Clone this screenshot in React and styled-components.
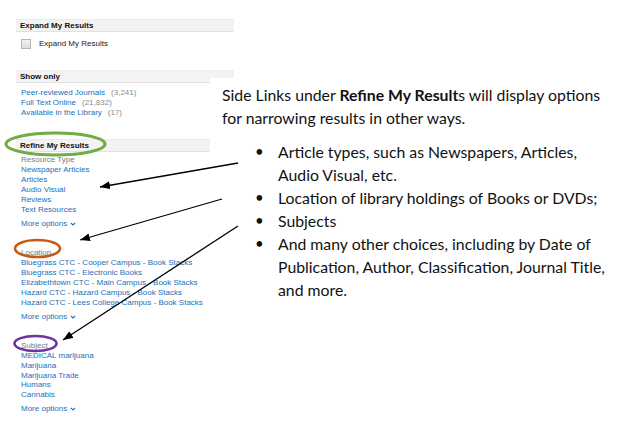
import React from "react";
import styled, { createGlobalStyle } from "styled-components";

const Global = createGlobalStyle`
  html, body { margin: 0; padding: 0; background: #fff; }
  body { font-family: "Liberation Sans", Arial, sans-serif; }
`;

const Page = styled.div`
  position: relative;
  width: 632px;
  height: 438px;
  overflow: hidden;
  background: #fff;
`;

const Sidebar = styled.div`
  width: 218px;
  margin-left: 16px;
  padding-top: 19px;
  font-family: "Liberation Sans", Arial, sans-serif;
  font-size: 8px;
  line-height: 10px;
`;

const SectionBar = styled.div`
  height: 11px;
  line-height: 11px;
  background: #f3f3f3;
  border-top: 1px solid #ebebeb;
  border-bottom: 1px solid #e2e2e2;
  padding-left: 4px;
  font-weight: bold;
  color: #111;
  margin-top: ${(p) => p.$top || 0}px;
`;

const CheckRow = styled.label`
  display: flex;
  align-items: center;
  gap: 8px;
  padding: 7px 0 0 5px;
  color: #222;
`;

const Box = styled.span`
  width: 8px;
  height: 8px;
  border: 1px solid #b5b5b5;
  background: linear-gradient(#f2f2f2, #dcdcdc);
`;

const LinkList = styled.ul`
  list-style: none;
  margin: ${(p) => p.$top || 0}px 0 0 0;
  padding: 0 0 0 5px;
`;

const Item = styled.li`
  height: ${(p) => p.$h || 10}px;
  white-space: nowrap;
  color: #1b6fb8;
`;

const Count = styled.span`
  color: #8a8a8a;
  margin-left: 6px;
`;

const GroupLabel = styled.div`
  padding-left: 5px;
  margin-top: ${(p) => p.$top || 0}px;
  height: 10px;
  color: #7a7a7a;
`;

const More = styled.div`
  padding-left: 5px;
  margin-top: 4px;
  height: 10px;
  color: #1b6fb8;
  display: flex;
  align-items: center;
  gap: 3px;
`;

const Callout = styled.div`
  position: absolute;
  left: 210px;
  top: 78px;
  right: 0;
  height: 230px;
  background: #fff;
  padding: 5px 0 0 12px;
  box-sizing: border-box;
  font-family: Lato, "Open Sans", sans-serif;
  font-size: 15.8px;
  line-height: 23px;
  color: #111;
`;

const Lead = styled.p`
  margin: 0;
  width: 386px;
`;

const Bullets = styled.ul`
  list-style: none;
  margin: 11px 0 0 0;
  padding: 0 0 0 33px;
`;

const Bullet = styled.li`
  display: grid;
  grid-template-columns: 23px 1fr;
  white-space: nowrap;
  &::before {
    content: "•";
    font-size: 15px;
  }
`;

const Annot = styled.svg`
  position: absolute;
  left: 0;
  top: 0;
  pointer-events: none;
`;

const Chevron = () => (
  <svg width="6" height="4" viewBox="0 0 6 4">
    <path d="M0.8 0.8 L3 3 L5.2 0.8" fill="none" stroke="#1b6fb8" strokeWidth="1.1" />
  </svg>
);

export default function App() {
  const resource = ["Newspaper Articles", "Articles", "Audio Visual", "Reviews", "Text Resources"];
  const location = [
    "Bluegrass CTC - Cooper Campus - Book Stacks",
    "Bluegrass CTC - Electronic Books",
    "Elizabethtown CTC - Main Campus - Book Stacks",
    "Hazard CTC - Hazard Campus - Book Stacks",
    "Hazard CTC - Lees College Campus - Book Stacks",
  ];
  const subject = ["MEDICAL marijuana", "Marijuana", "Marijuana Trade", "Humans", "Cannabis"];

  return (
    <Page>
      <Global />
      <Sidebar>
        <SectionBar>Expand My Results</SectionBar>
        <CheckRow>
          <Box />
          Expand My Results
        </CheckRow>

        <SectionBar $top={21}>Show only</SectionBar>
        <LinkList $top={5}>
          <Item>Peer-reviewed Journals<Count>(3,241)</Count></Item>
          <Item>Full Text Online<Count>(21,832)</Count></Item>
          <Item>Available in the Library<Count>(17)</Count></Item>
        </LinkList>

        <SectionBar $top={21}>Refine My Results</SectionBar>
        <GroupLabel $top={3}>Resource Type</GroupLabel>
        <LinkList>
          {resource.map((r) => <Item key={r}>{r}</Item>)}
        </LinkList>
        <More>More options <Chevron /></More>

        <GroupLabel $top={19}>Location</GroupLabel>
        <LinkList>
          {location.map((r) => <Item key={r}>{r}</Item>)}
        </LinkList>
        <More>More options <Chevron /></More>

        <GroupLabel $top={19}>Subject</GroupLabel>
        <LinkList>
          {subject.map((r) => <Item key={r} $h={9.8}>{r}</Item>)}
        </LinkList>
        <More>More options <Chevron /></More>
      </Sidebar>

      <Callout>
        <Lead>
          Side Links under <b>Refine My Result</b>s will display options for narrowing results in other ways.
        </Lead>
        <Bullets>
          <Bullet><span>Article types, such as Newspapers, Articles,<br />Audio Visual, etc.</span></Bullet>
          <Bullet><span>Location of library holdings of Books or DVDs;</span></Bullet>
          <Bullet><span>Subjects</span></Bullet>
          <Bullet><span>And many other choices, including by Date of<br />Publication, Author, Classification, Journal Title,<br />and more.</span></Bullet>
        </Bullets>
      </Callout>

      <Annot width="632" height="438" viewBox="0 0 632 438">
        <defs>
          <marker id="ah" viewBox="0 0 10 8" refX="10" refY="4" markerWidth="10" markerHeight="8" markerUnits="userSpaceOnUse" orient="auto">
            <path d="M0 0 L10 4 L0 8 Z" fill="#000" />
          </marker>
        </defs>
        <ellipse cx="55.5" cy="144" rx="49.5" ry="11" fill="none" stroke="#70ad47" strokeWidth="3" />
        <ellipse cx="37.5" cy="248.5" rx="22.5" ry="8.5" fill="none" stroke="#c55a11" strokeWidth="2.5" />
        <ellipse cx="35.5" cy="343.5" rx="21" ry="7.5" fill="none" stroke="#7030a0" strokeWidth="2.5" />
        <line x1="238" y1="163" x2="100" y2="187" stroke="#000" strokeWidth="1.3" markerEnd="url(#ah)" />
        <line x1="222" y1="199" x2="80" y2="240" stroke="#000" strokeWidth="1.3" markerEnd="url(#ah)" />
        <line x1="238" y1="226" x2="63" y2="340" stroke="#000" strokeWidth="1.3" markerEnd="url(#ah)" />
      </Annot>
    </Page>
  );
}
